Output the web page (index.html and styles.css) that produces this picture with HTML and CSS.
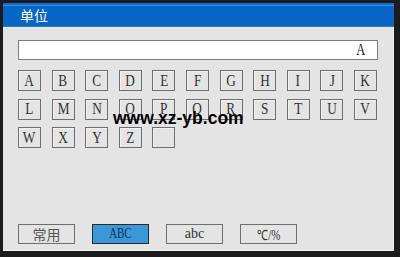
FILE: index.html
```html
<!DOCTYPE html>
<html>
<head>
<meta charset="utf-8">
<link rel="stylesheet" href="styles.css">
</head>
<body>
<div class="frame">
  <div class="titlebar"><span class="title">单位</span></div>
  <div class="content">
    <div class="input"><span class="glyph">A</span></div>
    <div class="keys">
      <div class="key"><span class="glyph">A</span></div><div class="key"><span class="glyph">B</span></div><div class="key"><span class="glyph">C</span></div><div class="key"><span class="glyph">D</span></div><div class="key"><span class="glyph">E</span></div><div class="key"><span class="glyph">F</span></div><div class="key"><span class="glyph">G</span></div><div class="key"><span class="glyph">H</span></div><div class="key"><span class="glyph">I</span></div><div class="key"><span class="glyph">J</span></div><div class="key"><span class="glyph">K</span></div>
      <div class="key"><span class="glyph">L</span></div><div class="key"><span class="glyph">M</span></div><div class="key"><span class="glyph">N</span></div><div class="key"><span class="glyph">O</span></div><div class="key"><span class="glyph">P</span></div><div class="key"><span class="glyph">Q</span></div><div class="key"><span class="glyph">R</span></div><div class="key"><span class="glyph">S</span></div><div class="key"><span class="glyph">T</span></div><div class="key"><span class="glyph">U</span></div><div class="key"><span class="glyph">V</span></div>
      <div class="key"><span class="glyph">W</span></div><div class="key"><span class="glyph">X</span></div><div class="key"><span class="glyph">Y</span></div><div class="key"><span class="glyph">Z</span></div><div class="key"></div>
    </div>
    <div class="modes">
      <div class="mode cjk">常用</div>
      <div class="mode selected"><span class="glyph">ABC</span></div>
      <div class="mode">abc</div>
      <div class="mode"><span class="glyph">℃/%</span></div>
    </div>
  </div>
  <div class="watermark">www.xz-yb.com</div>
</div>
</body>
</html>
```

FILE: styles.css
```css
html, body {
  margin: 0;
  padding: 0;
  background: #ffffff;
}
.frame {
  position: relative;
  width: 400px;
  height: 257px;
  box-sizing: border-box;
  border-style: solid;
  border-color: #1c1c1c;
  border-width: 3px 6px 6px 3px;
  background: #e4e4e4;
  display: flex;
  flex-direction: column;
  box-shadow: inset -1px -1px 0 #f4f4f4;
}
.titlebar {
  height: 23px;
  flex: none;
  background: #0866c6;
  border-bottom: 1px solid #2a7f9a;
  box-shadow: inset 0 2px 0 #0a70d8, inset 0 3px 0 #3d8fe0;
  display: flex;
  align-items: center;
  padding-left: 17px;
}
.title {
  color: #ffffff;
  font-family: "Noto Sans CJK SC", sans-serif;
  font-size: 14px;
  line-height: 14px;
  margin-top: 1px;
}
.content {
  flex: 1;
  display: flex;
  flex-direction: column;
  padding: 13px 16px 7px 15px;
}
.glyph {
  display: inline-block;
  transform: scaleX(0.78);
}
.input {
  height: 20px;
  box-sizing: border-box;
  border: 1px solid #7c7c7c;
  background: #ffffff;
  display: flex;
  align-items: center;
  justify-content: flex-end;
  padding-right: 10px;
  font-family: "Liberation Serif", serif;
  font-size: 16px;
  color: #202020;
}
.keys {
  margin-top: 10px;
  display: grid;
  grid-template-columns: repeat(11, 23px);
  grid-auto-rows: 21px;
  column-gap: 10.6px;
  row-gap: 7.6px;
}
.key {
  box-sizing: border-box;
  border: 1px solid #6e6e6e;
  box-shadow: inset 1px 1px 0 #f2f2f2;
  display: flex;
  align-items: center;
  justify-content: center;
  font-family: "Liberation Serif", serif;
  font-size: 17px;
  color: #333333;
}
.modes {
  margin-top: auto;
  display: flex;
  gap: 17px;
}
.mode {
  width: 57px;
  height: 20px;
  box-sizing: border-box;
  border: 1px solid #6e6e6e;
  display: flex;
  align-items: center;
  justify-content: center;
  font-family: "Liberation Serif", serif;
  font-size: 14px;
  color: #303030;
}
.mode.cjk {
  font-family: "Noto Sans CJK SC", sans-serif;
  font-size: 14px;
  color: #555555;
}
.mode.selected {
  background: #3a98d8;
  border-color: #2a2a2a;
  color: #13305a;
}
.watermark {
  position: absolute;
  left: 110px;
  top: 105px;
  font-family: "Liberation Sans", sans-serif;
  font-weight: bold;
  font-size: 17.5px;
  color: #000000;
  white-space: nowrap;
}
```
